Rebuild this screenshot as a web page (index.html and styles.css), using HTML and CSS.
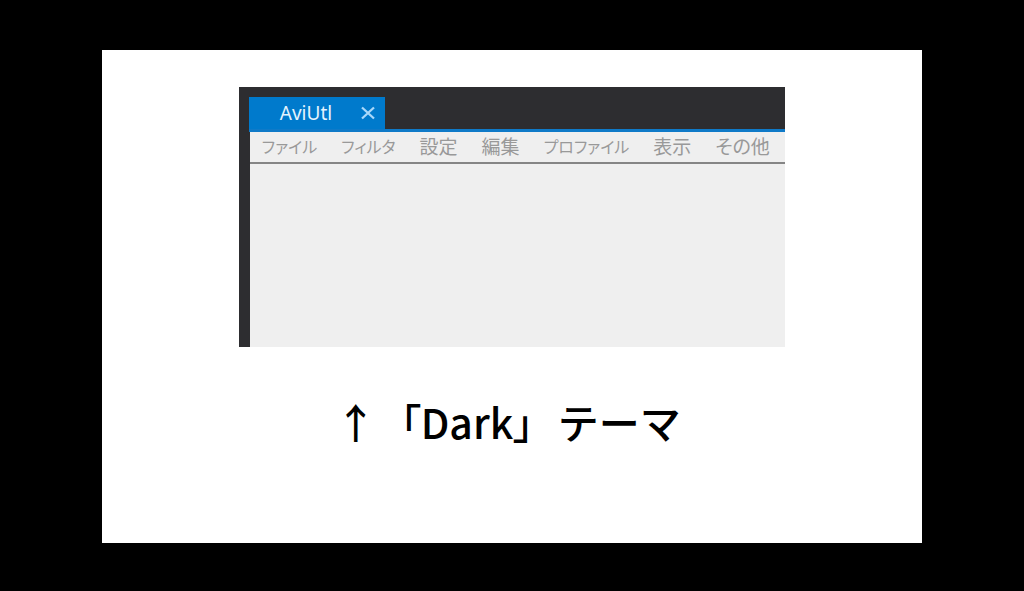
FILE: index.html
```
<!DOCTYPE html>
<html lang="ja">
<head>
    <meta charset="UTF-8">
    <meta name="viewport" content="width=device-width, initial-scale=1.0">
    <title>AviUtl - Dark テーマ</title>
    <link rel="stylesheet" href="styles.css">
</head>
<body>
    <main class="slide">
        <section class="window">
            <div class="tab-bar">
                <div class="tab">
                    <span>AviUtl</span>
                    <button type="button" class="close" aria-label="閉じる">
                        <svg viewBox="0 0 14 14" width="14" height="14">
                            <path d="M1 1.5 L13 12.5 M13 1.5 L1 12.5" fill="none" stroke="#a9d8fa" stroke-width="2.3"/>
                        </svg>
                    </button>
                </div>
            </div>
            <div class="client">
                <nav class="menu">
                    <a href="#" class="kana">ファイル</a>
                    <a href="#" class="kana">フィルタ</a>
                    <a href="#">設定</a>
                    <a href="#">編集</a>
                    <a href="#" class="kana">プロファイル</a>
                    <a href="#">表示</a>
                    <a href="#">その他</a>
                </nav>
            </div>
        </section>
        <p class="caption"><span>↑</span><span>「Dark」</span><span class="theme">テーマ</span></p>
    </main>
</body>
</html>
```
FILE: styles.css
```
* {
    box-sizing: border-box;
}
body {
    margin: 0;
    min-height: 100vh;
    padding: 50px 10% 48px;
    background-color: #000;
    display: flex;
    font-family: "Noto Sans", "Noto Sans CJK JP", sans-serif;
}
.slide {
    flex: 1;
    padding-top: 37px;
    background-color: #fff;
    display: flex;
    flex-direction: column;
    align-items: center;
}
.window {
    width: 66.7%;
    height: 260px;
    padding: 10px 0 0 10px;
    background-color: #2d2d30;
    display: flex;
    flex-direction: column;
}
.tab-bar {
    border-bottom: 3px solid #0f7ac8;
}
.tab {
    width: 136px;
    height: 32px;
    padding: 0 10px 0 31px;
    background-color: #007acc;
    color: #e4f3fd;
    font-size: 19px;
    line-height: 32px;
    display: flex;
    align-items: center;
    justify-content: space-between;
}
.close {
    padding: 0;
    border: 0;
    background: none;
    display: flex;
    cursor: pointer;
}
.client {
    flex: 1;
    margin-left: 1px;
    background-color: #efefef;
}
.menu {
    height: 32px;
    padding: 0 0 3px 12px;
    border-bottom: 2px solid #858585;
    display: flex;
    align-items: center;
    gap: 24px;
}
.menu a {
    color: #999;
    font-family: "Noto Sans CJK JP", sans-serif;
    font-size: 19px;
    line-height: 28px;
    text-decoration: none;
    white-space: nowrap;
    font-feature-settings: "palt";
}
.menu .kana {
    font-size: 16px;
}

/* 下の説明文 */
.caption {
    margin: 44px 0 0;
    padding-right: 8px;
    display: flex;
    gap: 24px;
    font-family: "Noto Sans CJK JP", sans-serif;
    font-size: 41px;
    font-weight: 500;
    line-height: 60px;
    color: #000;
    white-space: nowrap;
    font-feature-settings: "palt";
}
.caption .theme {
    font-feature-settings: normal;
}
```
